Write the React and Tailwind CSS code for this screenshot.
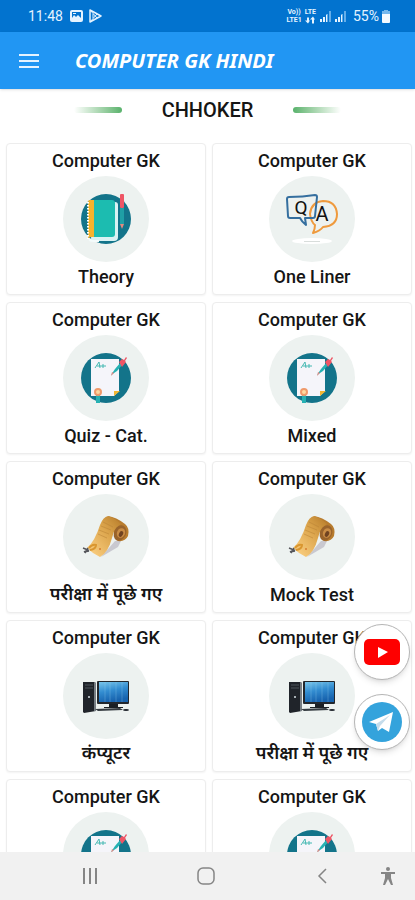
import React from "react";

const cards = [
  { label: "Theory", Icon: NotebookIcon },
  { label: "One Liner", Icon: QuestionIcon },
  { label: "Quiz - Cat.", Icon: PaperIcon },
  { label: "Mixed", Icon: PaperIcon },
  { label: "परीक्षा में पूछे गए", Icon: ScrollIcon, hindi: true },
  { label: "Mock Test", Icon: ScrollIcon },
  { label: "कंप्यूटर", Icon: ComputerIcon, hindi: true },
  { label: "परीक्षा में पूछे गए", Icon: ComputerIcon, hindi: true },
  { Icon: PaperIcon },
  { Icon: PaperIcon },
];

function NotebookIcon() {
  return (
    <svg viewBox="0 0 86 86" className="size-full" aria-hidden="true">
      <circle cx="43" cy="43" r="25" fill="#13748a" />
      <path d="M29 26h23q3 0 3 3v32q0 4-4 4H28z" fill="#d9f2f3" />
      <path d="M31 24h18q3 0 3 3v31q0 3-3 3H31z" fill="#1cbcb0" />
      <path d="M25 26q0-2 2-2h4v37h-3q-3 0-3 3z" fill="#f5b32c" />
      <path d="M25 26v37" stroke="#fff" strokeWidth="2" strokeDasharray="1.5 1.5" />
      <path d="M26 63q1 2 4 2h6" stroke="#f4fbfb" strokeWidth="2" fill="none" />
      <rect x="57" y="18" width="4" height="14" rx="1" fill="#ee5565" />
      <rect x="57" y="32" width="4" height="16" fill="#1f9fa5" />
      <path d="M57 48h4l-2 5z" fill="#e58a80" />
    </svg>
  );
}

function QuestionIcon() {
  return (
    <svg viewBox="0 0 86 86" className="size-full" aria-hidden="true">
      <ellipse cx="43" cy="65" rx="20" ry="3" fill="#fff" />
      <path d="M35 65.500h16" stroke="#d8dddb" strokeWidth="1" />
      <path
        d="M46 49q0 4-2 8q7-2 10-6q14-1 14-13q-1-13-14-13q-12 1-13 13q1 8 5 11z"
        fill="none"
        stroke="#ef9a3d"
        strokeWidth="2"
        strokeLinejoin="round"
      />
      <path
        d="M20 21q14 0 26-2q2 0 2 2l-2 19q0 2-2 2h-8l1 7q-4-3-6-7l-10 0q-2 0-2-2l-1-17q0-2 2-2z"
        fill="none"
        stroke="#356f9f"
        strokeWidth="2"
        strokeLinejoin="round"
      />
      <text x="32" y="38" textAnchor="middle" fontSize="19" fill="#111">
        Q
      </text>
      <text x="53" y="45" textAnchor="middle" fontSize="20" fill="#111">
        A
      </text>
    </svg>
  );
}

function PaperIcon() {
  return (
    <svg viewBox="0 0 86 86" className="size-full" aria-hidden="true">
      <circle cx="43" cy="43" r="25" fill="#13748a" />
      <path d="M28 24h28v32l-5 5H28z" fill="#f5f5fa" />
      <path d="M51 61v-5h6z" fill="#f2b632" />
      <path d="M32 33l4-6 1 6M34 31h4M40 29v4M38 31h5" stroke="#45b8b2" strokeWidth="1" fill="none" />
      <path d="M34 61h2v6h-2z" stroke="#26b1b3" strokeWidth="2" />
      <circle cx="35" cy="57" r="3" fill="#fcd9a0" stroke="#ef9a6b" strokeWidth="2" />
      <path d="M48 40l4-6 6-7 2 2-6 7z" fill="#26b1b3" />
      <path d="M48 41l1-4 2 1z" fill="#d88c86" />
      <path d="M56 27l3-3 2 1 2-3 1 1-2 3 1 1-4 5z" fill="#ee5565" />
    </svg>
  );
}

function ScrollIcon() {
  return (
    <svg viewBox="0 0 86 86" className="size-full" aria-hidden="true">
      <defs>
        <linearGradient id="parchment" x1="1" y1="0" x2="0" y2="1">
          <stop offset="0" stopColor="#b57a28" />
          <stop offset="0.400" stopColor="#dca54c" />
          <stop offset="1" stopColor="#ffd589" />
        </linearGradient>
      </defs>
      <path d="M38 63l14-16 6 0-3 6z" fill="#c9c9d0" />
      <path d="M45 22q8 1 17 8q5 4 3 12q-3 6-10 5q-4-2-3-6z" fill="#b87c2e" />
      <path d="M45 22q-5 1-8 9q-5 16-13 23q5 5 13 9q8-4 12-19q2-10 9-14q-6-6-13-8z" fill="url(#parchment)" />
      <ellipse cx="57" cy="39" rx="6" ry="8" fill="#99632b" transform="rotate(25 57 39)" />
      <ellipse cx="58" cy="39" rx="4" ry="5" fill="#c98c45" transform="rotate(25 58 39)" />
      <ellipse cx="58" cy="40" rx="2" ry="3" fill="#704321" transform="rotate(25 58 40)" />
      <path d="M40 28l10 5M38 32l10 4M36 36l10 4M35 40l9 4" stroke="#b98235" strokeWidth="1" opacity="0.500" />
      <circle cx="37" cy="55" r="1" fill="#d57e31" />
      <path d="M26 54q3-4 7-3q0 4-6 5" fill="none" stroke="#d9962f" strokeWidth="2" />
      <path d="M20 54l5 2-4 2 5-1M25 54l-3 5" stroke="#55565b" strokeWidth="1.500" fill="none" />
    </svg>
  );
}

function ComputerIcon() {
  return (
    <svg viewBox="0 0 86 86" className="size-full" aria-hidden="true">
      <defs>
        <linearGradient id="screen" x1="0" y1="0" x2="0.300" y2="1">
          <stop offset="0" stopColor="#78c5ea" />
          <stop offset="0.500" stopColor="#328cd0" />
          <stop offset="1" stopColor="#1763ae" />
        </linearGradient>
      </defs>
      <path d="M20 29h11l2 1v28l-12 2-1-1z" fill="#20242a" />
      <path d="M31 29l2 1v28h-2z" fill="#777e84" />
      <path d="M22 32h8M22 35h8" stroke="#4d545a" strokeWidth="1" />
      <circle cx="26" cy="44" r="1" fill="#d6dfe5" />
      <rect x="34" y="28" width="32" height="23" rx="1" fill="#22272d" />
      <rect x="36" y="29" width="29" height="20" fill="url(#screen)" />
      <path d="M42 29v20M47 29v20M53 29v20M59 29v20" stroke="#a7dcf5" strokeWidth="1" opacity="0.250" />
      <path d="M46 51h9v3h5v1H41v-1h5z" fill="#1b2025" />
      <path d="M32 56l25-1 3 2-25 1z" fill="#353b40" />
      <ellipse cx="63" cy="57" rx="3" ry="1" fill="#22272d" />
    </svg>
  );
}

function SignalIcon() {
  return (
    <svg viewBox="0 0 12 12" className="size-3" aria-hidden="true">
      <path d="M1 9h2v3H1zM4 7h2v5H4z" fill="#e5f3ff" />
      <path d="M7 4h2v8H7zM10 1h2v11h-2z" fill="#65aee9" />
      <path d="M7 5h1v7H7z" fill="#e5f3ff" />
    </svg>
  );
}

function StatusBar() {
  return (
    <div className="flex h-8 shrink-0 items-center justify-between bg-[#0273cf] pr-[25px] pl-7 text-[#e5f3ff]">
      <div className="flex items-center gap-1.5">
        <span className="w-9 text-sm">11:48</span>
        <svg viewBox="0 0 13 12" className="h-3 w-[13px]" aria-hidden="true">
          <rect width="13" height="12" rx="2" fill="#e5f3ff" />
          <path d="M2 2h9v6L8 5 6 7 4 5 2 8z" fill="#0273cf" />
          <path d="M3 3h3v1H3z" fill="#e5f3ff" />
        </svg>
        <svg viewBox="0 0 13 14" className="h-3.5 w-[13px]" fill="none" stroke="#e5f3ff" aria-hidden="true">
          <path d="M1 1l11 6-11 6z" strokeWidth="1.500" strokeLinejoin="round" />
          <path d="M1 1l7 8M1 13l7-8M4 5v4" strokeWidth="1" />
        </svg>
      </div>
      <div className="flex items-center gap-[3px]">
        <div className="flex flex-col items-center text-[7px] leading-2 font-bold">
          <span>Vo))</span>
          <span>LTE1</span>
        </div>
        <div className="flex flex-col items-center text-[7px] leading-2 font-bold">
          <span>LTE</span>
          <svg viewBox="0 0 10 7" className="h-2 w-2.5" fill="#e5f3ff" aria-hidden="true">
            <path d="M2 1h2v3h1L3 7 0 4h2zM7 7V3H5l3-3 2 3H9v4z" />
          </svg>
        </div>
        <SignalIcon />
        <SignalIcon />
        <span className="ml-1 text-sm">55%</span>
        <svg viewBox="0 0 8 13" className="h-[13px] w-2" aria-hidden="true">
          <path d="M2 0h4v1h2v3H0V1h2z" fill="#75b8ed" />
          <path d="M0 4h8v8q0 1-1 1H1q-1 0-1-1z" fill="#f4faff" />
        </svg>
      </div>
    </div>
  );
}

function Card({ label, Icon, hindi }) {
  return (
    <a
      href="#"
      className="flex h-[152px] flex-col items-center rounded-sm border border-[#ededed] bg-white pt-[5px] shadow-xs"
    >
      <span className="text-lg leading-6 font-medium">Computer GK</span>
      <span className="mt-[3px] size-[86px] shrink-0 rounded-full bg-[#edf2f0]">
        <Icon />
      </span>
      {label && (
        <span className={hindi ? "mt-0.5 text-lg leading-6 font-semibold" : "mt-[3px] text-lg leading-6 font-medium"}>
          {label}
        </span>
      )}
    </a>
  );
}

function NavBar() {
  return (
    <nav className="flex h-12 shrink-0 items-center bg-[#f1f1f1] pr-[19px] pl-8 text-[#858585]">
      <button type="button" aria-label="Recents" className="flex flex-1 justify-center">
        <svg viewBox="0 0 16 16" className="size-4" stroke="currentColor" strokeWidth="2">
          <path d="M2 0v16M8 0v16M14 0v16" />
        </svg>
      </button>
      <button type="button" aria-label="Home" className="flex flex-1 justify-center">
        <svg viewBox="0 0 18 18" className="size-[18px]" fill="none" stroke="currentColor" strokeWidth="1.500">
          <rect x="1" y="1" width="16" height="16" rx="5" />
        </svg>
      </button>
      <button type="button" aria-label="Back" className="flex flex-1 justify-center">
        <svg viewBox="0 0 10 16" className="h-4 w-2.5" fill="none" stroke="currentColor" strokeWidth="1.500">
          <path d="M9 1L2 8l7 7" />
        </svg>
      </button>
      <button type="button" aria-label="Accessibility" className="w-4">
        <svg viewBox="0 0 16 20" className="h-5 w-4" fill="currentColor">
          <circle cx="8" cy="3" r="2" />
          <path d="M1 6h14v2h-4v4l2 7h-2l-3-6-3 6H3l2-7V8H1z" />
        </svg>
      </button>
    </nav>
  );
}

function App() {
  return (
    <div className="flex h-screen flex-col bg-white font-[Roboto,'Noto_Sans',sans-serif] text-[#151515]">
      <StatusBar />

      <header className="z-10 flex h-[57px] shrink-0 items-center bg-[#2196f3] pl-[19px] text-white shadow-sm">
        <button type="button" aria-label="Menu">
          <svg viewBox="0 0 20 14" className="h-3.5 w-5" stroke="#e5f3ff" strokeWidth="2">
            <path d="M0 1h20M0 7h20M0 13h20" />
          </svg>
        </button>
        <h1 className="ml-9 font-['Noto_Sans',sans-serif] text-xl font-bold whitespace-nowrap italic">
          COMPUTER GK HINDI
        </h1>
      </header>

      <div className="relative min-h-0 flex-1">
        <main className="h-full overflow-hidden">
          <div className="mb-3 flex h-[42px] items-center justify-center gap-10">
            <span className="h-1.5 w-12 rounded-sm bg-linear-to-r from-white to-[#58b26c]" />
            <h2 className="text-xl font-medium">CHHOKER</h2>
            <span className="h-1.5 w-12 rounded-sm bg-linear-to-l from-white to-[#58b26c]" />
          </div>

          <div className="grid grid-cols-2 gap-x-1.5 gap-y-[7px] pr-[3px] pl-1.5">
            {cards.map((card, i) => (
              <Card key={i} {...card} />
            ))}
          </div>
        </main>

        {/* Floating social buttons */}
        <div className="absolute right-[5px] bottom-[102px] flex flex-col gap-3.5">
          <a
            href="#"
            aria-label="YouTube"
            className="flex size-14 items-center justify-center rounded-full border border-[#b5b5b5] bg-white shadow-md"
          >
            <svg viewBox="0 0 36 26" className="h-[26px] w-9">
              <rect width="36" height="26" rx="5" fill="#fe0000" />
              <path d="M14 8l10 5-10 6z" fill="#fff" />
            </svg>
          </a>
          <a
            href="#"
            aria-label="Telegram"
            className="flex size-14 items-center justify-center rounded-full border border-[#b5b5b5] bg-white shadow-md"
          >
            <svg viewBox="0 0 40 40" className="size-10">
              <circle cx="20" cy="20" r="20" fill="#34a3dc" />
              <path d="M7 20L31 10 27 30 20 26 16 29 14 22z" fill="#fff" />
              <path d="M14 22L28 13 18 24 16 29z" fill="#c5dceb" />
            </svg>
          </a>
        </div>
      </div>

      <NavBar />
    </div>
  );
}

export default App;
